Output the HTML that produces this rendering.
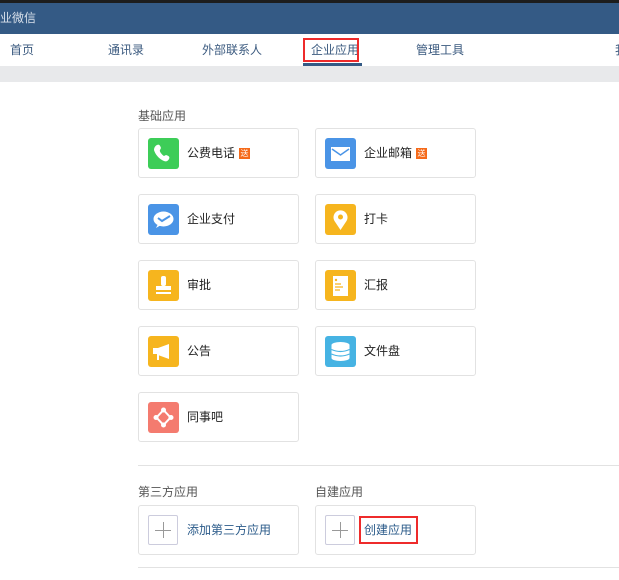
<!DOCTYPE html>
<html><head><meta charset="utf-8"><style>
*{margin:0;padding:0;box-sizing:border-box}
body{width:619px;height:580px;overflow:hidden;background:#fff;font-family:"Liberation Sans","Noto Sans CJK SC",sans-serif;position:relative}
.a{position:absolute}
.top{left:0;top:0;width:619px;height:3px;background:#1d1d1d}
.hdr{left:0;top:3px;width:619px;height:31px;background:#345a85;color:#d8e0ea;font-size:12px;line-height:31px}
.nav{font-size:12px;color:#3b5a7f;top:41px;line-height:18px}
.gray{left:0;top:66px;width:619px;height:16px;background:#e8e9eb}
.card{width:161px;height:50px;border:1px solid #e2e2e2;border-radius:3px;background:#fff}
.ic{position:absolute;left:9px;top:9px;width:31px;height:31px;border-radius:3px}
.ic svg{width:31px;height:31px;display:block}
.t{position:absolute;left:48px;top:15px;font-size:12px;color:#222;line-height:18px}
.badge{display:inline-block;width:11px;height:11px;background:#f56a1a;color:#fff;font-size:8px;line-height:11px;text-align:center;margin-left:4px;vertical-align:1px}
.lbl{font-size:12px;color:#555}
.plus{position:absolute;left:9px;top:9px;width:30px;height:30px;border:1px solid #ccd;border-radius:2px}
.plus:before{content:"";position:absolute;left:6px;top:13.5px;width:16px;height:1px;background:#999}
.plus:after{content:"";position:absolute;left:13.5px;top:6px;width:1px;height:16px;background:#999}
</style></head><body>
<div class="a top"></div>
<div class="a hdr">业微信</div>
<div class="a nav" style="left:10px">首页</div>
<div class="a nav" style="left:108px">通讯录</div>
<div class="a nav" style="left:202px">外部联系人</div>
<div class="a nav" style="left:311px">企业应用</div>
<div class="a" style="left:303px;top:38px;width:56px;height:24px;border:2px solid #ee2b2b"></div>
<div class="a" style="left:303px;top:63px;width:59px;height:3px;background:#345a85"></div>
<div class="a nav" style="left:416px">管理工具</div>
<div class="a nav" style="left:615px">我</div>
<div class="a gray"></div>

<div class="a lbl" style="left:138px;top:107px">基础应用</div>

<div class="a card" style="left:138px;top:128px"><div class="ic" style="background:#3dcd58"><svg viewBox="0 0 31 31"><path d="M9 7c2-1 3 0 4 3l-1 2c-1 1 2 5 4 6l2-1c3 1 4 2 3 4-1 2-3 3-5 2-5-2-9-7-10-11 0-2 1-4 3-5z" fill="#fff"/></svg></div><div class="t">公费电话<span class="badge">送</span></div></div>
<div class="a card" style="left:315px;top:128px"><div class="ic" style="background:#4a94e6"><svg viewBox="0 0 31 31"><rect x="6" y="9" width="19" height="14" fill="#fff"/><path d="M7 11l8.5 6 8.5-6" stroke="#4a94e6" stroke-width="1.5" fill="none"/></svg></div><div class="t">企业邮箱<span class="badge">送</span></div></div>

<div class="a card" style="left:138px;top:194px"><div class="ic" style="background:#4a94e6"><svg viewBox="0 0 31 31"><ellipse cx="15.5" cy="15" rx="10" ry="7.5" fill="#fff"/><path d="M8 24l2-4 3 1z" fill="#fff"/><path d="M10 14l4 3 8-5" stroke="#4a94e6" stroke-width="2" fill="none"/></svg></div><div class="t">企业支付</div></div>
<div class="a card" style="left:315px;top:194px"><div class="ic" style="background:#f6b51e"><svg viewBox="0 0 31 31"><path d="M15.5 26l-6-9a7 7 0 1 1 12 0z" fill="#fff"/><circle cx="15.5" cy="13" r="2.5" fill="#f6b51e"/></svg></div><div class="t">打卡</div></div>

<div class="a card" style="left:138px;top:260px"><div class="ic" style="background:#f6b51e"><svg viewBox="0 0 31 31"><rect x="13" y="6" width="5" height="10" rx="2" fill="#fff"/><rect x="8" y="16" width="15" height="4" fill="#fff"/><rect x="8" y="22" width="15" height="2" fill="#fff"/></svg></div><div class="t">审批</div></div>
<div class="a card" style="left:315px;top:260px"><div class="ic" style="background:#f6b51e"><svg viewBox="0 0 31 31"><rect x="8" y="6" width="15" height="20" fill="#fff"/><circle cx="11" cy="10" r="1.2" fill="#f6b51e"/><path d="M10 14h6M10 17h8M10 20h5" stroke="#f6b51e" stroke-width="1.3"/></svg></div><div class="t">汇报</div></div>

<div class="a card" style="left:138px;top:326px"><div class="ic" style="background:#f6b51e"><svg viewBox="0 0 31 31"><rect x="5" y="12" width="5" height="6" fill="#fff"/><path d="M10 12l11-4v15l-11-4z" fill="#fff"/><rect x="9" y="18" width="2" height="6" fill="#fff"/></svg></div><div class="t">公告</div></div>
<div class="a card" style="left:315px;top:326px"><div class="ic" style="background:#46b3e3"><svg viewBox="0 0 31 31"><ellipse cx="15.5" cy="9" rx="9" ry="3" fill="#fff"/><rect x="6.5" y="9" width="18" height="13" fill="#fff"/><ellipse cx="15.5" cy="22" rx="9" ry="3" fill="#fff"/><path d="M6.5 13.5q9 4 18 0M6.5 18q9 4 18 0" stroke="#46b3e3" stroke-width="1.2" fill="none"/></svg></div><div class="t">文件盘</div></div>

<div class="a card" style="left:138px;top:392px"><div class="ic" style="background:#f47b6f"><svg viewBox="0 0 31 31"><path d="M15.5 8l7 7.5-7 7.5-7-7.5z" stroke="#fff" stroke-width="2" fill="none"/><circle cx="15.5" cy="8" r="2.5" fill="#fff"/><circle cx="8" cy="15.5" r="2.5" fill="#fff"/><circle cx="23" cy="15.5" r="2.5" fill="#fff"/><circle cx="15.5" cy="23" r="2.5" fill="#fff"/></svg></div><div class="t">同事吧</div></div>

<div class="a" style="left:138px;top:465px;width:481px;height:1px;background:#e2e2e2"></div>
<div class="a lbl" style="left:138px;top:483px">第三方应用</div>
<div class="a lbl" style="left:315px;top:483px">自建应用</div>
<div class="a card" style="left:138px;top:505px"><div class="plus"></div><div class="t" style="color:#2b5b8a">添加第三方应用</div></div>
<div class="a card" style="left:315px;top:505px"><div class="plus"></div><div class="t" style="color:#2b5b8a">创建应用</div></div>
<div class="a" style="left:359px;top:516px;width:59px;height:28px;border:2px solid #ee2b2b"></div>
<div class="a" style="left:138px;top:567px;width:481px;height:1px;background:#e2e2e2"></div>
</body></html>
